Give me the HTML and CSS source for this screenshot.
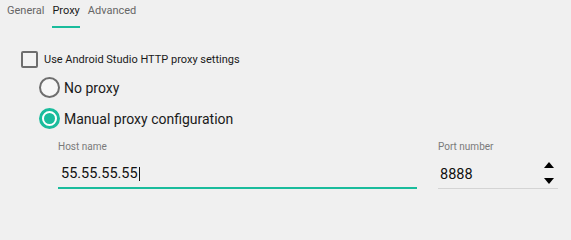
FILE: index.html
```html
<!DOCTYPE html>
<html>
<head>
<meta charset="utf-8">
<link rel="stylesheet" href="styles.css">
</head>
<body>
<div class="tabs">
  <div class="tab">General</div>
  <div class="tab active">Proxy</div>
  <div class="tab">Advanced</div>
</div>
<div class="content">
  <div class="check-row">
    <span class="checkbox"></span>
    <span class="check-label">Use Android Studio HTTP proxy settings</span>
  </div>
  <div class="radios">
    <div class="radio-row">
      <span class="radio"></span>
      <span class="radio-label">No proxy</span>
    </div>
    <div class="radio-row">
      <span class="radio checked"><span class="dot"></span></span>
      <span class="radio-label">Manual proxy configuration</span>
    </div>
  </div>
  <div class="fields">
    <div class="field host">
      <div class="field-label">Host name</div>
      <div class="field-input"><span class="value">55.55.55.55</span><span class="caret"></span></div>
    </div>
    <div class="field port">
      <div class="field-label">Port number</div>
      <div class="field-input"><span class="value">8888</span>
        <span class="spinner">
          <svg width="10" height="6" viewBox="0 0 10 6"><path d="M5 0 L10 6 L0 6 Z" fill="#000"/></svg>
          <svg width="10" height="6" viewBox="0 0 10 6"><path d="M0 0 L10 0 L5 6 Z" fill="#000"/></svg>
        </span>
      </div>
    </div>
  </div>
</div>
</body>
</html>
```
FILE: styles.css
```css
html, body {
  margin: 0;
  padding: 0;
  background: #f0f0f0;
  font-family: Roboto, "Liberation Sans", sans-serif;
  color: #1a1a1a;
  width: 571px;
  height: 203px;
  overflow: hidden;
}
.tabs {
  display: flex;
  gap: 8px;
  padding-left: 7px;
  padding-top: 4px;
}
.tab {
  font-size: 11px;
  line-height: 14px;
  color: #666;
  padding-bottom: 8px;
  border-bottom: 2px solid transparent;
}
.tab.active {
  color: #1a1a1a;
  border-bottom-color: #1abc9c;
}
.content {
  padding-left: 21px;
  padding-top: 23px;
}
.check-row {
  display: flex;
  align-items: center;
  height: 17px;
  gap: 6px;
}
.checkbox {
  box-sizing: border-box;
  width: 17px;
  height: 17px;
  border: 2px solid #6e6e6e;
  border-radius: 2px;
  background: #f3f3f3;
}
.check-label {
  font-size: 11px;
  color: #1a1a1a;
}
.radios {
  padding-left: 18px;
  padding-top: 9px;
  display: flex;
  flex-direction: column;
  gap: 10px;
}
.radio-row {
  display: flex;
  align-items: center;
  gap: 4px;
  height: 21px;
}
.radio {
  box-sizing: border-box;
  width: 21px;
  height: 21px;
  border: 2px solid #6e6e6e;
  border-radius: 50%;
  background: #f7f7f7;
  display: flex;
  align-items: center;
  justify-content: center;
}
.radio.checked {
  border: 3px solid #1abc9c;
  background: #fff;
}
.dot {
  width: 11px;
  height: 11px;
  border-radius: 50%;
  background: #1abc9c;
}
.radio-label {
  font-size: 14px;
  color: #1a1a1a;
}
.fields {
  display: flex;
  gap: 21px;
  padding-left: 37px;
  padding-top: 12px;
}
.field-label {
  font-size: 10px;
  color: #7a7a7a;
  line-height: 12px;
}
.field-input {
  display: flex;
  align-items: center;
  height: 27px;
  margin-top: 9px;
  box-sizing: border-box;
}
.host {
  width: 359px;
}
.host .field-input {
  border-bottom: 2px solid #1abc9c;
  padding-left: 3px;
}
.port {
  width: 120px;
}
.port .field-input {
  border-bottom: 1px solid #d4d4d4;
  padding-left: 2px;
}
.value {
  font-size: 14.5px;
  color: #111;
  padding-bottom: 2px;
}
.caret {
  width: 1px;
  height: 14px;
  background: #111;
  margin-left: 1px;
  margin-bottom: 1px;
}
.spinner {
  margin-left: auto;
  margin-right: 4px;
  align-self: flex-start;
  display: flex;
  flex-direction: column;
  gap: 10px;
}
.spinner svg {
  display: block;
}
```
